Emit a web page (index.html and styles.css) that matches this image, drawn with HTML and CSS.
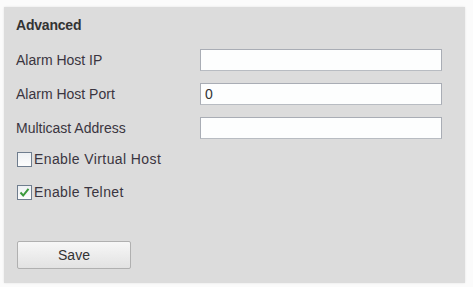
FILE: index.html
```html
<!DOCTYPE html>
<html lang="en">
<head>
    <meta charset="UTF-8">
    <title>Advanced</title>
    <link rel="stylesheet" href="styles.css">
</head>
<body>
    <div class="panel">
        <div class="title">Advanced</div>

        <div class="row">
            <label for="alarmHostIp">Alarm Host IP</label>
            <input type="text" id="alarmHostIp" value="">
        </div>
        <div class="row">
            <label for="alarmHostPort">Alarm Host Port</label>
            <input type="text" id="alarmHostPort" value="0">
        </div>
        <div class="row">
            <label for="multicast">Multicast Address</label>
            <input type="text" id="multicast" value="">
        </div>

        <div class="check first">
            <span class="box"></span>
            <span>Enable Virtual Host</span>
        </div>
        <div class="check">
            <span class="box">
                <svg width="11" height="11" viewBox="0 0 11 11"><path d="M1.5 5.5 L4.2 8.5 L9.5 1.8" fill="none" stroke="#3c9a3c" stroke-width="2"/></svg>
            </span>
            <span>Enable Telnet</span>
        </div>

        <button type="button" class="save">Save</button>
    </div>
</body>
</html>
```

FILE: styles.css
```css
body {
    margin: 0;
    background: #fbfbfb;
    font-family: "Liberation Sans", Arial, sans-serif;
    font-size: 14px;
    color: #3a3540;
}
.panel {
    margin: 7px 8px 4px 4px;
    height: 268px;
    padding: 8px 0 0 12px;
    background: #dcdcdc;
    box-shadow: 0 0 2px #e4e4e4;
}
.title {
    font-weight: bold;
    line-height: 20px;
    margin-bottom: 14px;
    color: #333;
    letter-spacing: -0.2px;
}
.row {
    display: flex;
    align-items: center;
    height: 22px;
    margin-bottom: 12px;
}
.row label {
    width: 184px;
}
.row input {
    width: 242px;
    height: 22px;
    box-sizing: border-box;
    border: 1px solid #a9adb5;
    border-bottom-color: #b8bcc2;
    background: #fdfefe;
    padding: 2px 4px;
    font-family: inherit;
    font-size: 14px;
    color: #333;
}
.check {
    display: flex;
    align-items: center;
    height: 22px;
    margin-bottom: 11px;
    margin-left: 1px;
    letter-spacing: 0.4px;
}
.check.first {
    margin-top: -3px;
}
.box {
    width: 13px;
    height: 13px;
    border: 1px solid #6f7d8e;
    background: linear-gradient(#eef1f4, #fdfdfd);
    display: flex;
    align-items: center;
    justify-content: center;
    margin-right: 2px;
}
.save {
    margin-top: 27px;
    margin-left: 1px;
    width: 114px;
    height: 28px;
    border: 1px solid #b0b0b0;
    border-radius: 2px;
    background: linear-gradient(#f7f7f7, #e2e2e2);
    font-family: inherit;
    font-size: 14px;
    color: #333;
}
```
